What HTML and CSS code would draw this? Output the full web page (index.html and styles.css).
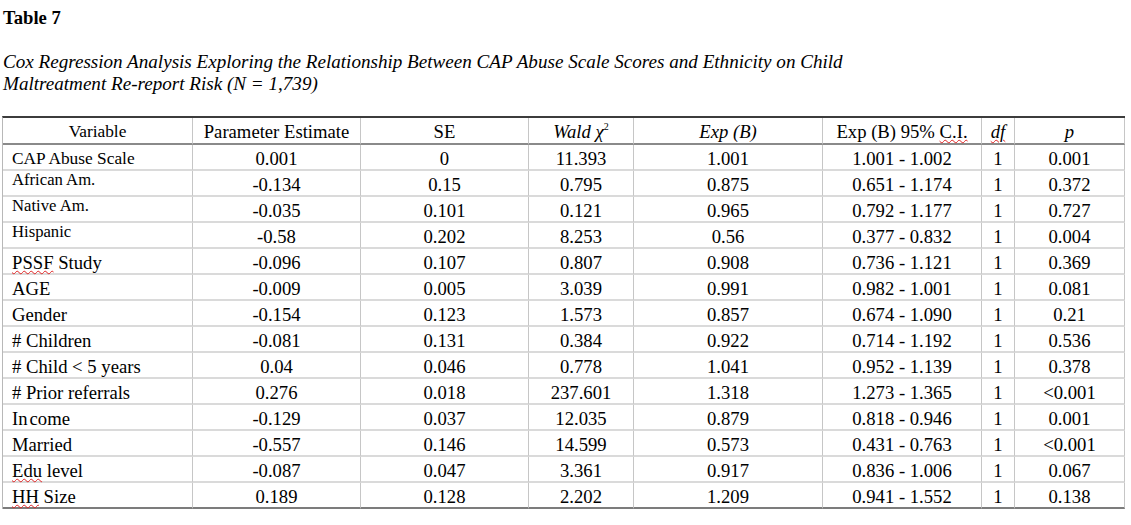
FILE: index.html
```html
<!DOCTYPE html>
<html>
<head>
<meta charset="utf-8">
<title>Table 7</title>
<link rel="stylesheet" href="styles.css">
</head>
<body>
<div class="title">Table 7</div>
<div class="caption">Cox Regression Analysis Exploring the Relationship Between CAP Abuse Scale Scores and Ethnicity on Child<br>Maltreatment Re-report Risk (N = 1,739)</div>
<table class="grid">
  <colgroup>
    <col class="c1"><col class="c2"><col class="c3"><col class="c4"><col class="c5"><col class="c6"><col class="c7"><col class="c8">
  </colgroup>
  <thead>
    <tr>
      <th class="var-head">Variable</th>
      <th>Parameter Estimate</th>
      <th>SE</th>
      <th><i>Wald χ</i><sup class="sq">2</sup></th>
      <th><i>Exp (B)</i></th>
      <th>Exp (B) 95% <span class="sp">C.I.</span></th>
      <th><i class="sp">df</i></th>
      <th><i>p</i></th>
    </tr>
  </thead>
  <tbody>
    <tr><td class="lab lab-mid">CAP Abuse Scale</td><td>0.001</td><td>0</td><td>11.393</td><td>1.001</td><td>1.001 - 1.002</td><td>1</td><td>0.001</td></tr>
    <tr><td class="lab lab-small">African Am.</td><td>-0.134</td><td>0.15</td><td>0.795</td><td>0.875</td><td>0.651 - 1.174</td><td>1</td><td>0.372</td></tr>
    <tr><td class="lab lab-small">Native Am.</td><td>-0.035</td><td>0.101</td><td>0.121</td><td>0.965</td><td>0.792 - 1.177</td><td>1</td><td>0.727</td></tr>
    <tr><td class="lab lab-small">Hispanic</td><td>-0.58</td><td>0.202</td><td>8.253</td><td>0.56</td><td>0.377 - 0.832</td><td>1</td><td>0.004</td></tr>
    <tr><td class="lab"><span class="sp">PSSF</span> Study</td><td>-0.096</td><td>0.107</td><td>0.807</td><td>0.908</td><td>0.736 - 1.121</td><td>1</td><td>0.369</td></tr>
    <tr><td class="lab">AGE</td><td>-0.009</td><td>0.005</td><td>3.039</td><td>0.991</td><td>0.982 - 1.001</td><td>1</td><td>0.081</td></tr>
    <tr><td class="lab">Gender</td><td>-0.154</td><td>0.123</td><td>1.573</td><td>0.857</td><td>0.674 - 1.090</td><td>1</td><td>0.21</td></tr>
    <tr><td class="lab"># Children</td><td>-0.081</td><td>0.131</td><td>0.384</td><td>0.922</td><td>0.714 - 1.192</td><td>1</td><td>0.536</td></tr>
    <tr><td class="lab"># Child &lt; 5 years</td><td>0.04</td><td>0.046</td><td>0.778</td><td>1.041</td><td>0.952 - 1.139</td><td>1</td><td>0.378</td></tr>
    <tr><td class="lab"># Prior referrals</td><td>0.276</td><td>0.018</td><td>237.601</td><td>1.318</td><td>1.273 - 1.365</td><td>1</td><td>&lt;0.001</td></tr>
    <tr><td class="lab">In<span class="kern">come</span></td><td>-0.129</td><td>0.037</td><td>12.035</td><td>0.879</td><td>0.818 - 0.946</td><td>1</td><td>0.001</td></tr>
    <tr><td class="lab">Married</td><td>-0.557</td><td>0.146</td><td>14.599</td><td>0.573</td><td>0.431 - 0.763</td><td>1</td><td>&lt;0.001</td></tr>
    <tr><td class="lab"><span class="sp">Edu</span> level</td><td>-0.087</td><td>0.047</td><td>3.361</td><td>0.917</td><td>0.836 - 1.006</td><td>1</td><td>0.067</td></tr>
    <tr><td class="lab"><span class="sp">HH</span> Size</td><td>0.189</td><td>0.128</td><td>2.202</td><td>1.209</td><td>0.941 - 1.552</td><td>1</td><td>0.138</td></tr>
  </tbody>
</table>
</body>
</html>
```
FILE: styles.css
```css
html, body {
  margin: 0;
  padding: 0;
  background: #ffffff;
}
body {
  padding-left: 2px;
  font-family: "Liberation Serif", "Times New Roman", serif;
  font-size: 18.67px;
  color: #000000;
}
.title {
  margin-top: 7px;
  padding-left: 1px;
  font-weight: bold;
  line-height: 21px;
}
.caption {
  margin-top: 23px;
  padding-left: 1px;
  font-style: italic;
  font-size: 19.1px;
  line-height: 22px;
}
.grid {
  margin-top: 21px;
  border-collapse: separate;
  border-spacing: 0;
  table-layout: fixed;
  width: 1123px;
  border-left: 1px solid #b8b8b8;
  border-top: 2px solid #3c3c3c;
}
.c1 { width: 190px; }
.c2 { width: 168px; }
.c3 { width: 168px; }
.c4 { width: 105px; }
.c5 { width: 189px; }
.c6 { width: 159px; }
.c7 { width: 33px; }
.c8 { width: 110px; }
.grid th,
.grid td {
  box-sizing: border-box;
  height: 26px;
  padding: 3px 0 0 0;
  line-height: 21px;
  border-right: 1px solid #c6c6c6;
  border-bottom: 2px solid #dadada;
  vertical-align: top;
  text-align: center;
  font-weight: normal;
  white-space: nowrap;
  overflow: visible;
}
.grid thead th {
  height: 27px;
  line-height: 22px;
  border-bottom-color: #8a8a8a;
}
.grid tbody tr:last-child td {
  border-bottom-color: #7c7c7c;
}
.grid .var-head {
  font-size: 17.33px;
}
.grid .lab {
  text-align: left;
  padding-left: 9px;
}
.grid .lab-mid {
  font-size: 17.33px;
}
.grid .lab-small {
  font-size: 16.67px;
  line-height: 17px;
  padding-top: 0;
}
.sq {
  font-size: 10px;
  line-height: 0;
  vertical-align: 8px;
}
.sp {
  text-decoration-line: underline;
  text-decoration-style: wavy;
  text-decoration-color: #e02424;
  text-decoration-thickness: 1px;
  text-underline-offset: 1px;
}
.kern {
  margin-left: 2px;
}
```
